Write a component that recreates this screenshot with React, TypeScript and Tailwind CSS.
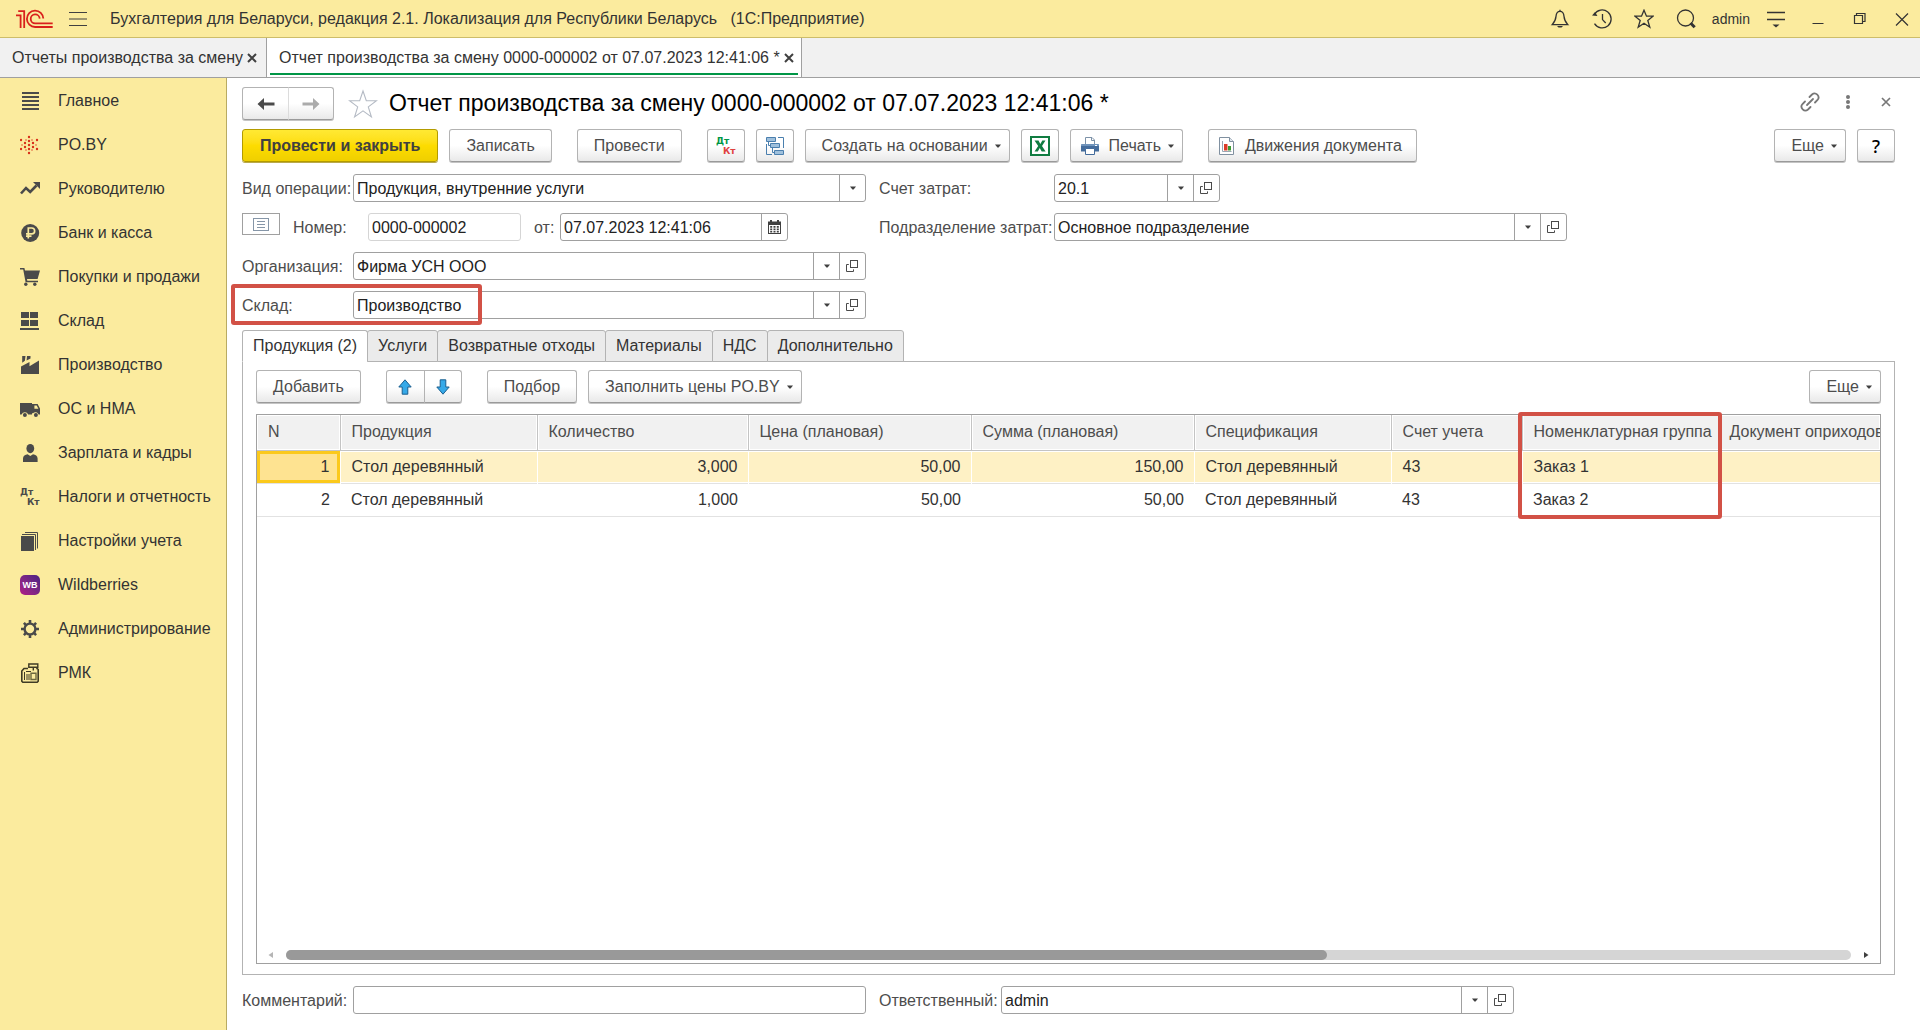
import React, { useState } from "react";

/* ---------- small shared pieces ---------- */

const BTN =
  "flex h-[33px] shrink-0 items-center justify-center rounded-[3px] border border-[#b3b3b3] border-b-[#9a9a9a] bg-linear-to-b from-white from-50% to-[#e9e9e9] text-[#4d4d4d] shadow-[0_1px_0_#c4c4c4] whitespace-nowrap";

function Caret({ className = "" }: { className?: string }) {
  return (
    <svg className={className} width="6" height="4" viewBox="0 0 6 4" fill="#404040" aria-hidden="true">
      <path d="M0 0.5h6L3.6 3.5H2.4z" />
    </svg>
  );
}

function OpenIcon() {
  return (
    <svg width="13" height="13" viewBox="0 0 13 13" fill="none" stroke="#4a4a4a" aria-hidden="true">
      <rect x="4.5" y="0.5" width="7" height="7" />
      <path d="M2.8 4.5H0.5v7h7V9.4" />
    </svg>
  );
}

function DebitCredit({ top, bottom }: { top: string; bottom: string }) {
  return (
    <svg width="20" height="20" viewBox="0 0 20 20" fontFamily="'DejaVu Sans', sans-serif" fontWeight="bold" aria-hidden="true">
      <text x="0" y="8" fontSize="9" fill={top}>Дт</text>
      <text x="7" y="18" fontSize="9" fill={bottom}>Кт</text>
    </svg>
  );
}

/* ---------- sidebar icons ---------- */

const DARK = "#4a4a4a";

const icons: Record<string, React.ReactNode> = {
  main: (
    <path fill={DARK} d="M2 1h17v2H2zM2 5h17v2H2zM2 9h17v2H2zM2 13h17v2H2zM2 17h17v2H2z" />
  ),
  poby: (
    <g fill="#d9301a">
      {[
        [9, 2], [9, 6], [9, 10], [9, 14], [9, 18], [5, 8], [5, 12], [13, 8], [13, 12],
        [1, 5], [1, 14], [17, 5], [17, 14], [6, 5], [12, 5], [6, 15], [12, 15], [2, 10], [16, 10],
      ].map(([x, y]) => (
        <circle key={`${x}-${y}`} cx={x} cy={y} r={x === 6 || x === 12 || (y === 10 && x !== 9) ? 0.7 : 1.2} />
      ))}
    </g>
  ),
  manager: (
    <>
      <path d="M1 14.5l5-5.5 4.2 4L16.5 6.5" fill="none" stroke={DARK} strokeWidth="2.6" />
      <path d="M13 3h7v7z" fill={DARK} />
    </>
  ),
  bank: (
    <>
      <circle cx="10.2" cy="10" r="9" fill={DARK} />
      <path d="M8.3 15.5V5h3.4a2.9 2.9 0 0 1 0 5.9H6M6 13.2h5.5" fill="none" stroke="#fbeb9e" strokeWidth="1.7" />
    </>
  ),
  cart: (
    <g fill={DARK}>
      <path d="M0 1h4.4l.6 2.4h15L17.6 12H7l.3 1.7H18v1.6H5.6L3.2 2.6H0z" />
      <circle cx="5.8" cy="17.2" r="1.7" />
      <circle cx="14.8" cy="17.2" r="1.7" />
    </g>
  ),
  stock: (
    <path fill={DARK} d="M1 1h8v6H1zM10 1h8v6h-8zM1 9h8v6H1zM10 9h8v6h-8zM0 17h19v2H0z" />
  ),
  factory: (
    <path fill={DARK} d="M1 19v-7.5L9.500 7v4.200L19 5.500V19zM2.200 1h3.300l-.6 4.800-2.700 2zM7 1h3.500v2.600L6.600 5.400z" />
  ),
  truck: (
    <g fill={DARK}>
      <path d="M0 4h12v11.5H8.2a3.6 3.6 0 0 0-6.6 0H0z" />
      <path fillRule="evenodd" d="M12 5h5.600l2.400 4.500v6h-1.400a3.400 3.400 0 0 0-5.600-1.300h-1zM14.400 6.400v3.400h4l-1.700-3.400z" />
      <circle cx="4.9" cy="16" r="2" />
      <circle cx="15.9" cy="16" r="2" />
    </g>
  ),
  person: (
    <g fill={DARK}>
      <ellipse cx="10.3" cy="5.6" rx="3.9" ry="4.6" />
      <path d="M3 19v-3.6c0-2.4 2.2-3.6 4.6-4.1l2.7 1.7 2.7-1.7c2.4.5 4.6 1.7 4.6 4.1V19z" />
    </g>
  ),
  books: (
    <g fill={DARK}>
      <path d="M1 5h13v15H1z" />
      <path d="M2 3.500h13.500V19" fill="none" stroke={DARK} />
      <path d="M5 1.500h12.500V17.500" fill="none" stroke={DARK} />
    </g>
  ),
  gear: (
    <g fill="none" stroke={DARK}>
      <circle cx="10" cy="10" r="5.4" strokeWidth="2.4" />
      <path strokeWidth="2.6" d="M10 1v3M10 16v3M1 10h3M16 10h3M3.900 3.900L5.800 5.800M14.200 14.200l1.900 1.900M3.900 16.100l1.900-1.900M14.200 5.800l1.900-1.900" />
    </g>
  ),
  register: (
    <g fill="none" stroke="#3f3b25">
      <path strokeWidth="1.6" d="M8 5.500H4L1.800 8v10.200l1 1h14.400l1-1V6.500l-1-1h-1" />
      <path strokeWidth="1.400" d="M8.800 1h9v3.200h-9zM13.300 4.500v3" />
      <path d="M4.500 9v8M7 11v6M9 11v6M6 8.500h5" />
      <path strokeWidth="1.400" d="M11 10.200h5v6.300h-5z" stroke="#6d683f" />
    </g>
  ),
};

function NavIcon({ name }: { name: string }) {
  if (name === "dtkt") return <DebitCredit top={DARK} bottom={DARK} />;
  if (name === "wb")
    return (
      <span className="flex size-5 items-center justify-center rounded-[5px] bg-linear-to-tr from-[#b01a86] to-[#4a2183] text-[9px] font-bold text-white">
        WB
      </span>
    );
  return (
    <svg width="20" height="20" viewBox="0 0 20 20" aria-hidden="true">
      {icons[name]}
    </svg>
  );
}

const NAV: [string, string][] = [
  ["main", "Главное"],
  ["poby", "PO.BY"],
  ["manager", "Руководителю"],
  ["bank", "Банк и касса"],
  ["cart", "Покупки и продажи"],
  ["stock", "Склад"],
  ["factory", "Производство"],
  ["truck", "ОС и НМА"],
  ["person", "Зарплата и кадры"],
  ["dtkt", "Налоги и отчетность"],
  ["books", "Настройки учета"],
  ["wb", "Wildberries"],
  ["gear", "Администрирование"],
  ["register", "РМК"],
];

/* ---------- window chrome ---------- */

function TitleBar() {
  return (
    <header className="flex h-[38px] shrink-0 items-center border-b border-[#cdbd6a] bg-[#fbeb9e] pr-2 pl-4">
      <svg width="38" height="20" viewBox="16 8 38 20" fill="none" stroke="#d9201c" strokeWidth="1.8" aria-label="1С" role="img">
        <path d="M16 14.4h4.6V27M18.2 10.2h6V27" />
        <path d="M43.3 17.6A8.2 8.2 0 1 0 35.2 26h17.5" />
        <path d="M39.7 17.6A4.5 4.5 0 1 0 35.2 22.4h17.5" />
      </svg>
      <button aria-label="Главное меню" className="ml-[14px]">
        <svg width="20" height="20" viewBox="0 0 20 20" stroke="#404040" strokeWidth="1.2">
          <path d="M1 3.5h18M1 10h18M1 16.5h18" />
        </svg>
      </button>
      <p className="ml-[22px] min-w-0 flex-1 truncate whitespace-pre text-[#333]">
        {"Бухгалтерия для Беларуси, редакция 2.1. Локализация для Республики Беларусь   (1С:Предприятие)"}
      </p>
      <div className="flex items-center gap-[22px] text-[#333]">
        <button aria-label="Уведомления">
          <svg width="20" height="20" viewBox="0 0 20 20" fill="none" stroke="currentColor" strokeWidth="1.3">
            <path d="M10 2.4c2.600 0 3.800 2.200 4 5 .3 4 1.400 5.700 3.800 8.200H2.200C4.600 13.100 5.700 11.400 6 7.400c.2-2.800 1.400-5 4-5z" />
            <path d="M7 17h6l-1.500 1.600h-3z" fill="currentColor" stroke="none" />
            <path d="M10 .8v1.500" />
          </svg>
        </button>
        <button aria-label="История">
          <svg width="20" height="20" viewBox="0 0 20 20" fill="none" stroke="currentColor" strokeWidth="1.3">
            <path d="M2.300 5.500a9 9 0 1 1 .2 9.200" />
            <path d="M0 6.600l5.400.4-2.300-4z" fill="currentColor" stroke="none" />
            <path d="M10.500 5v5.600l3.200 3.400" />
          </svg>
        </button>
        <button aria-label="Избранное">
          <svg width="20" height="20" viewBox="0 0 20 20" fill="none" stroke="currentColor" strokeWidth="1.3">
            <path d="M10 1.200l2.500 6h6.500l-5.200 4.300 2 6.700L10 14.200l-5.800 4 2-6.700L1 7.200h6.500z" />
          </svg>
        </button>
        <button aria-label="Поиск">
          <svg width="20" height="20" viewBox="0 0 20 20" fill="none" stroke="currentColor" strokeWidth="1.300">
            <circle cx="9.500" cy="9" r="8" />
            <path d="M14.500 14l4.200 4.200" strokeWidth="3" />
          </svg>
        </button>
      </div>
      <span className="mx-4 text-sm text-[#333]">admin</span>
      <div className="flex items-center gap-[22px] text-[#333]">
        <button aria-label="Параметры">
          <svg width="20" height="20" viewBox="0 0 20 20" stroke="currentColor" strokeWidth="1.300">
            <path d="M1 3.500h18M1 10.500h18" />
            <path d="M6.500 15.500h7L10 18.500z" fill="currentColor" stroke="none" />
          </svg>
        </button>
        <button aria-label="Свернуть">
          <svg width="20" height="20" viewBox="0 0 20 20" stroke="currentColor">
            <path d="M4.500 14.500h11" />
          </svg>
        </button>
        <button aria-label="Восстановить">
          <svg width="20" height="20" viewBox="0 0 20 20" fill="none" stroke="currentColor" strokeWidth="1.200">
            <path d="M4.500 6.500h8v8h-8zM6.500 6.500v-2h8.500v8h-2.500" />
          </svg>
        </button>
        <button aria-label="Закрыть окно">
          <svg width="20" height="20" viewBox="0 0 20 20" stroke="currentColor" strokeWidth="1.200">
            <path d="M4 4.500l12 12M16 4.500l-12 12" />
          </svg>
        </button>
      </div>
    </header>
  );
}

function CloseX({ size, width }: { size: number; width: number }) {
  return (
    <svg width={size} height={size} viewBox="0 0 10 10" stroke="currentColor" strokeWidth={width} aria-hidden="true">
      <path d="M1 1l8 8M9 1l-8 8" />
    </svg>
  );
}

function WindowTabs() {
  return (
    <nav className="flex h-10 shrink-0 border-b border-[#a0a0a0] bg-[#f1f1f1] text-[#333]">
      <div className="flex items-center gap-1 border-r border-[#a0a0a0] pr-[9px] pl-3">
        <button>Отчеты производства за смену</button>
        <button aria-label="Закрыть вкладку" className="text-[#404040]"><CloseX size={10} width={2} /></button>
      </div>
      <div className="flex border-r border-[#a0a0a0] bg-white px-[3px] pb-0.5">
        <div className="flex items-center gap-1 border-b-2 border-[#009646] pt-1 pr-1 pl-[9px]">
          <button>Отчет производства за смену 0000-000002 от 07.07.2023 12:41:06 *</button>
          <button aria-label="Закрыть вкладку" className="text-[#404040]"><CloseX size={10} width={2} /></button>
        </div>
      </div>
    </nav>
  );
}

function Sidebar() {
  return (
    <aside className="w-[227px] shrink-0 border-r border-[#b9ab62] bg-[#fbeb9e]">
      <ul className="pt-px">
        {NAV.map(([icon, label]) => (
          <li key={icon}>
            <a href="#" className="flex h-11 items-center gap-[18px] pl-5 whitespace-nowrap text-[#333]">
              <NavIcon name={icon} />
              {label}
            </a>
          </li>
        ))}
      </ul>
    </aside>
  );
}

/* ---------- fields ---------- */

function Field({
  id,
  value,
  className,
  list = true,
  open = true,
  calendar = false,
}: {
  id: string;
  value: string;
  className: string;
  list?: boolean;
  open?: boolean;
  calendar?: boolean;
}) {
  return (
    <div className={`flex h-7 shrink-0 overflow-hidden rounded-[3px] border border-[#a0a0a0] bg-white ${className}`}>
      <input id={id} defaultValue={value} className="min-w-0 flex-1 bg-transparent px-[3px] pt-px text-[#222] outline-none" />
      {list && (
        <button aria-label="Выбрать из списка" className="flex w-[26px] items-center justify-center border-l border-[#a0a0a0]">
          <Caret />
        </button>
      )}
      {open && (
        <button aria-label="Открыть" className="flex w-[26px] items-center justify-center border-l border-[#a0a0a0]">
          <OpenIcon />
        </button>
      )}
      {calendar && (
        <button aria-label="Календарь" className="flex w-[26px] items-center justify-center border-l border-[#a0a0a0]">
          <svg width="13" height="14" viewBox="0 0 13 14">
            <path fill="#404040" fillRule="evenodd" d="M0 1.500h2V0h2v1.500h5V0h2v1.500h2V14H0zM1 5v8h11V5z" />
            <path fill="#404040" d="M2.200 6h2v1.700h-2zM5.500 6h2v1.700h-2zM8.800 6h2v1.700h-2zM2.200 8.500h2v1.700h-2zM5.500 8.500h2v1.700h-2zM8.800 8.500h2v1.700h-2zM2.200 11h2v1.500h-2zM5.500 11h2v1.500h-2zM8.800 11h2v1.500h-2z" />
          </svg>
        </button>
      )}
    </div>
  );
}

function Label({ htmlFor, className, children }: { htmlFor: string; className: string; children: React.ReactNode }) {
  return (
    <label htmlFor={htmlFor} className={`shrink-0 pt-px whitespace-nowrap text-[#4d4d4d] ${className}`}>
      {children}
    </label>
  );
}

const Highlight = ({ className }: { className: string }) => (
  <div className={`pointer-events-none absolute rounded-[3px] border-4 border-[#d25146] ${className}`} />
);

function HeaderForm() {
  return (
    <form className="flex flex-col gap-[11px]">
      <div className="flex items-center">
        <Label htmlFor="operation" className="w-[111px]">Вид операции:</Label>
        <div className="flex h-7 w-[513px] shrink-0 overflow-hidden rounded-[3px] border border-[#a0a0a0]">
          <select id="operation" className="min-w-0 flex-1 appearance-none bg-transparent px-[3px] pt-px text-[#222] outline-none">
            <option>Продукция, внутренние услуги</option>
          </select>
          <span className="flex w-[26px] items-center justify-center border-l border-[#a0a0a0]"><Caret /></span>
        </div>
        <Label htmlFor="account" className="ml-[13px] w-[175px]">Счет затрат:</Label>
        <Field id="account" value="20.1" className="w-[166px]" />
      </div>

      <div className="flex items-center">
        <button type="button" aria-label="Показать реквизиты" className="mb-[6px] flex h-[22px] w-[38px] items-center justify-center border border-[#a0a0a0]">
          <svg width="16" height="13" viewBox="0 0 16 13" fill="none" stroke="#8696a8">
            <rect x="0.500" y="0.500" width="15" height="12" />
            <path d="M4 3.500h8M4 6.500h8M4 9.500h8" />
          </svg>
        </button>
        <Label htmlFor="number" className="ml-[13px] w-[75px]">Номер:</Label>
        <input id="number" defaultValue="0000-000002" className="h-7 w-[153px] rounded-[3px] border border-[#d5d5d5] px-[3px] pt-px text-[#222] outline-none" />
        <Label htmlFor="date" className="ml-[13px] w-[26px]">от:</Label>
        <Field id="date" value="07.07.2023 12:41:06" className="w-[228px]" list={false} open={false} calendar />
        <Label htmlFor="department" className="ml-[91px] w-[175px]">Подразделение затрат:</Label>
        <Field id="department" value="Основное подразделение" className="w-[513px]" />
      </div>

      <div className="flex items-center">
        <Label htmlFor="company" className="w-[111px]">Организация:</Label>
        <Field id="company" value="Фирма УСН ООО" className="w-[513px]" />
      </div>

      <div className="relative flex items-center">
        <Label htmlFor="warehouse" className="w-[111px]">Склад:</Label>
        <Field id="warehouse" value="Производство" className="w-[513px]" />
        <Highlight className="-top-[7px] -left-[11px] h-[41px] w-[251px]" />
      </div>
    </form>
  );
}

/* ---------- toolbars ---------- */

function CommandBar() {
  return (
    <div className="flex items-center gap-[11px]">
      <button className="flex h-[33px] shrink-0 items-center rounded-[3px] border border-[#b39b00] bg-linear-to-b from-[#ffe933] via-[#fddc00] to-[#efcf00] px-[17px] font-bold whitespace-nowrap text-[#404040] shadow-[0_1px_0_#b9a94c]">
        Провести и закрыть
      </button>
      <button className={`${BTN} px-4`}>Записать</button>
      <button className={`${BTN} ml-[14px] px-4`}>Провести</button>
      <button aria-label="Дт/Кт" className={`${BTN} ml-[14px] w-[38px]`}>
        <DebitCredit top="#009646" bottom="#e04040" />
      </button>
      <button aria-label="Структура подчиненности" className={`${BTN} w-[38px]`}>
        <svg width="20" height="20" viewBox="0 0 20 20" fill="#9fc0dc" stroke="#4a7fae">
          <path d="M1.500 1.500h9v4h-9zM5.500 7.500h9v4h-9zM9.500 14.500h9v4h-9z" />
          <path d="M13 1.500h5.500v10.500M7 18.500H1.500V8M3.500 5.500v4h2M7.500 11.500v5h2" fill="none" />
        </svg>
      </button>
      <button aria-haspopup="menu" className={`${BTN} pr-2 pl-4`}>
        Создать на основании <Caret className="ml-[7px]" />
      </button>
      <button aria-label="Excel" className={`${BTN} w-[38px]`}>
        <svg width="20" height="20" viewBox="0 0 20 20">
          <rect x="1" y="1" width="18" height="18" fill="#fff" stroke="#107c41" strokeWidth="2" />
          <path d="M4.500 4.500h4L10.300 8l2-3.500h3.200L12 10l3.600 5.500h-3.900L9.800 12l-2 3.500H4.500L8.200 10z" fill="#107c41" />
        </svg>
      </button>
      <button aria-haspopup="menu" className={`${BTN} pr-2 pl-[9px]`}>
        <svg width="20" height="20" viewBox="0 0 20 20">
          <path d="M5.500 8V1.500H12L14.500 4v4" fill="#fff" stroke="#7d92a8" />
          <path d="M11.500 1.500v3h3" fill="none" stroke="#7d92a8" />
          <path d="M1 9l1-1h16l1 1v6.500H1z" fill="#446c9c" />
          <path d="M1 9l1-1h16l1 1v1H1z" fill="#6f93bb" />
          <path d="M5.500 12.500h9v6h-9z" fill="#fff" stroke="#446c9c" />
          <path d="M15 9h2v1h-2z" fill="#fff" />
        </svg>
        <span className="ml-[9px]">Печать</span> <Caret className="ml-[7px]" />
      </button>
      <button className={`${BTN} ml-[14px] pr-[14px] pl-[9px]`}>
        <svg width="18" height="20" viewBox="0 0 18 20">
          <path d="M1.500 1.500h10l4 4v13h-14z" fill="#fff" stroke="#8090a0" />
          <path d="M11.500 1.500v4h4" fill="#dfe6ec" stroke="#8090a0" />
          <path d="M4.500 5v10.500h9" fill="none" stroke="#9aa6b2" />
          <path d="M6 8h3.500v6.500H6z" fill="#dc3c28" />
          <path d="M10 10h3v4.500h-3z" fill="#3d9a32" />
        </svg>
        <span className="ml-[9px]">Движения документа</span>
      </button>
      <div className="flex-1" />
      <button aria-haspopup="menu" className={`${BTN} pr-2 pl-4`}>
        Еще <Caret className="ml-[7px]" />
      </button>
      <button className={`${BTN} w-[38px] font-['Noto_Sans',sans-serif] text-lg font-medium text-black`}>?</button>
    </div>
  );
}

const TABS = ["Продукция (2)", "Услуги", "Возвратные отходы", "Материалы", "НДС", "Дополнительно"];

const COLUMNS = [
  "N", "Продукция", "Количество", "Цена (плановая)", "Сумма (плановая)",
  "Спецификация", "Счет учета", "Номенклатурная группа", "Документ оприходов",
];

const ROWS = [
  ["1", "Стол деревянный", "3,000", "50,00", "150,00", "Стол деревянный", "43", "Заказ 1", ""],
  ["2", "Стол деревянный", "1,000", "50,00", "50,00", "Стол деревянный", "43", "Заказ 2", ""],
];

const NUMERIC = [0, 2, 3, 4];

function ProductTable() {
  return (
    <div className="relative flex flex-1 flex-col border border-[#a0a0a0]">
      <div className="flex-1 overflow-hidden">
        <table className="w-full table-fixed border-collapse whitespace-nowrap">
          <colgroup>
            <col className="w-[83px]" />
            <col className="w-[197px]" />
            <col className="w-[211px]" />
            <col className="w-[223px]" />
            <col className="w-[223px]" />
            <col className="w-[197px]" />
            <col className="w-[131px]" />
            <col className="w-[197px]" />
            <col />
          </colgroup>
          <thead>
            <tr className="h-[35px]">
              {COLUMNS.map((c) => (
                <th key={c} className="border-r border-b border-[#c4c4c4] bg-[#f1f1f1] pr-[10px] pl-[11px] text-left font-normal text-[#4d4d4d] shadow-[inset_0_0_0_1px_#fff] last:border-r-0 last:pr-0 last:pl-[10px]">
                  {c}
                </th>
              ))}
            </tr>
          </thead>
          <tbody>
            {ROWS.map((row, r) => (
              <tr key={r} className="h-[33px] border-b border-[#e2e2e2]">
                {row.map((cell, c) => (
                  <td
                    key={c}
                    className={`pr-[10px] pl-[11px] text-[#333] ${NUMERIC.includes(c) ? "text-right" : "text-left"} ${
                      r === 0
                        ? c === 0
                          ? "bg-[#fee391] shadow-[inset_0_0_0_3px_#fbc91c]"
                          : "border-l border-white bg-[#fef1c5] shadow-[inset_0_1px_0_#fff,inset_0_-1px_0_#fff]"
                        : ""
                    }`}
                  >
                    {cell}
                  </td>
                ))}
              </tr>
            ))}
          </tbody>
        </table>
      </div>
      <div className="mb-[3px] flex h-[11px] items-center gap-3 px-[11px]">
        <svg width="6" height="6" viewBox="0 0 6 6" fill="#b5b5b5"><path d="M5 0v6L0.500 3z" /></svg>
        <div className="h-[10px] flex-1 rounded-full bg-[#d5d5d5]">
          <div className="h-full w-[66.500%] rounded-full bg-[#999]" />
        </div>
        <svg width="6" height="6" viewBox="0 0 6 6" fill="#404040"><path d="M1 0v6L5.500 3z" /></svg>
      </div>
      <Highlight className="-top-[3px] left-[1261px] h-[107px] w-[204px]" />
    </div>
  );
}

const ARROW = "M7 0.800L13.200 8H9.800v7.200H4.200V8H0.800z";

function Panel() {
  const [active, setActive] = useState(0);
  return (
    <section className="mt-[11px] flex flex-1 flex-col">
      <div role="tablist" className="relative z-10 -mb-px flex">
        {TABS.map((t, i) => (
          <button
            key={t}
            role="tab"
            aria-selected={i === active}
            onClick={() => setActive(i)}
            className={`-mr-px h-8 rounded-t-[3px] border border-[#b3b3b3] px-[10px] text-[#333] ${
              i === active ? "border-b-white bg-white" : "bg-[#ebebeb]"
            }`}
          >
            {t}
          </button>
        ))}
      </div>
      <div className="flex flex-1 flex-col gap-[11px] border border-[#b3b3b3] px-[13px] pt-2 pb-[10px]">
        <div className="flex gap-[11px]">
          <button className={`${BTN} px-4`}>Добавить</button>
          <div className="ml-[14px] flex">
            <button aria-label="Переместить вверх" className={`${BTN} w-[39px] rounded-r-none`}>
              <svg width="14" height="16" viewBox="0 0 14 16" fill="#36a9e8" stroke="#1b5f8f"><path d={ARROW} /></svg>
            </button>
            <button aria-label="Переместить вниз" className={`${BTN} -ml-px w-[38px] rounded-l-none`}>
              <svg className="rotate-180" width="14" height="16" viewBox="0 0 14 16" fill="#36a9e8" stroke="#1b5f8f"><path d={ARROW} /></svg>
            </button>
          </div>
          <button className={`${BTN} ml-[14px] px-4`}>Подбор</button>
          <button aria-haspopup="menu" className={`${BTN} pr-2 pl-4`}>
            Заполнить цены PO.BY <Caret className="ml-[7px]" />
          </button>
          <div className="flex-1" />
          <button aria-haspopup="menu" className={`${BTN} pr-2 pl-4`}>
            Еще <Caret className="ml-[7px]" />
          </button>
        </div>
        <ProductTable />
      </div>
    </section>
  );
}

/* ---------- page ---------- */

function DocumentHeader() {
  return (
    <div className="flex h-[31px] items-center">
      <div className="flex">
        <button aria-label="Назад" className={`${BTN} h-[30px] w-[47px] rounded-r-none`}>
          <svg width="18" height="14" viewBox="0 0 18 14" fill="#4a4a4a"><path d="M0.500 7L7 1v4.500h10.500v3H7V13z" /></svg>
        </button>
        <button aria-label="Вперед" className={`${BTN} -ml-px h-[30px] w-[46px] rounded-l-none border-l-[#dcdcdc]`}>
          <svg width="18" height="14" viewBox="0 0 18 14" fill="#ababab"><path d="M17.500 7L11 1v4.500H0.500v3H11V13z" /></svg>
        </button>
      </div>
      <button aria-label="В избранное" className="ml-[14px]">
        <svg width="30" height="30" viewBox="0 0 30 30" fill="#fff" stroke="#b4bac4" strokeWidth="1.100">
          <path d="M15 2l3.300 9.700h10.200l-8.200 6.200 3.100 10L15 21.900l-8.400 6 3.100-10-8.200-6.200h10.200z" />
        </svg>
      </button>
      <h1 className="ml-[11px] min-w-0 flex-1 truncate pb-px text-[23px] leading-[30px] text-black">
        Отчет производства за смену 0000-000002 от 07.07.2023 12:41:06 *
      </h1>
      <div className="flex items-center pb-[3px] text-[#777]">
        <button aria-label="Ссылка">
          <svg width="20" height="20" viewBox="0 0 20 20" fill="none" stroke="currentColor" strokeWidth="1.800" strokeLinecap="round">
            <path d="M7 13l6-6" />
            <path d="M9.500 5L12 2.500a3.900 3.900 0 0 1 5.500 5.500L15 10.500" />
            <path d="M10.500 15L8 17.500A3.900 3.900 0 0 1 2.500 12L5 9.500" />
          </svg>
        </button>
        <button aria-label="Еще действия" className="ml-[25px]">
          <svg width="6" height="16" viewBox="0 0 6 16" fill="currentColor">
            <circle cx="3" cy="3" r="2" /><circle cx="3" cy="8" r="2" /><circle cx="3" cy="13" r="2" />
          </svg>
        </button>
        <button aria-label="Закрыть" className="mr-1 ml-[30px]"><CloseX size={10} width={1.700} /></button>
      </div>
    </div>
  );
}

export default function App() {
  return (
    <div className="flex min-h-screen flex-col bg-white font-['Liberation_Sans',Arial,sans-serif] text-base leading-5">
      <TitleBar />
      <WindowTabs />
      <div className="flex flex-1">
        <Sidebar />
        <main className="flex min-w-0 flex-1 flex-col pt-[10px] pr-[25px] pb-4 pl-[15px]">
          <DocumentHeader />
          <div className="mt-[10px] mb-3"><CommandBar /></div>
          <HeaderForm />
          <Panel />
          <div className="mt-[11px] flex items-center">
            <Label htmlFor="comment" className="w-[111px]">Комментарий:</Label>
            <Field id="comment" value="" className="w-[513px]" list={false} open={false} />
            <Label htmlFor="responsible" className="ml-[13px] w-[122px]">Ответственный:</Label>
            <Field id="responsible" value="admin" className="w-[513px]" />
          </div>
        </main>
      </div>
    </div>
  );
}
